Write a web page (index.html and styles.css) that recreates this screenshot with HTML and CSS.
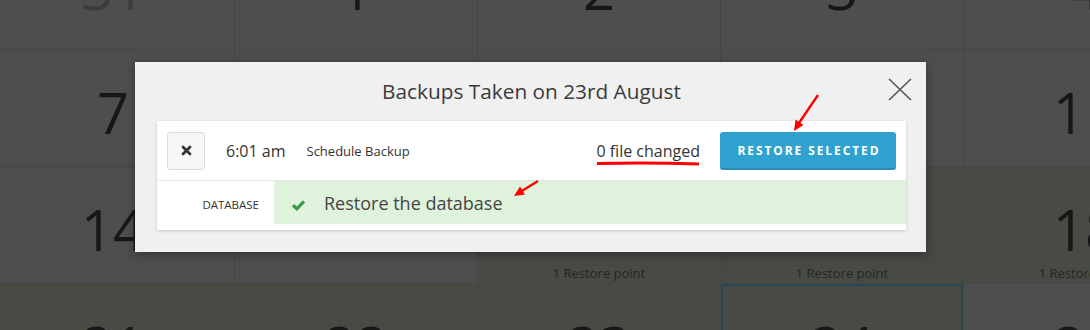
FILE: index.html
```html
<!DOCTYPE html>
<html lang="en">
<head>
<meta charset="utf-8">
<title>Backups</title>
<link rel="stylesheet" href="styles.css">
</head>
<body>
<div class="calendar">
  <div class="cell"><span class="num muted">31</span></div>
  <div class="cell"><span class="num">1</span></div>
  <div class="cell"><span class="num">2</span></div>
  <div class="cell"><span class="num">3</span></div>
  <div class="cell"><span class="num">4</span></div>

  <div class="cell"><span class="num">7</span></div>
  <div class="cell"><span class="num">8</span></div>
  <div class="cell"><span class="num">9</span></div>
  <div class="cell"><span class="num">10</span></div>
  <div class="cell"><span class="num">11</span></div>

  <div class="cell"><span class="num">14</span></div>
  <div class="cell"><span class="num">15</span></div>
  <div class="cell has-backup"><span class="num">16</span><span class="points">1 Restore point</span></div>
  <div class="cell has-backup"><span class="num">17</span><span class="points">1 Restore point</span></div>
  <div class="cell has-backup"><span class="num">18</span><span class="points">1 Restore point</span></div>

  <div class="cell has-backup"><span class="num">21</span></div>
  <div class="cell has-backup"><span class="num">22</span></div>
  <div class="cell has-backup"><span class="num">23</span></div>
  <div class="cell has-backup today"><span class="num">24</span></div>
  <div class="cell"><span class="num">25</span></div>
</div>

<div class="modal">
  <div class="modal-header">
    <h2 class="modal-title">Backups Taken on 23rd August</h2>
    <button class="modal-close" aria-label="Close">
      <svg width="24" height="23" viewBox="0 0 24 23"><path d="M1 1 L23 22 M23 1 L1 22" stroke="#555" stroke-width="1.6" fill="none"/></svg>
    </button>
  </div>
  <div class="panel">
    <div class="backup-row">
      <button class="remove-btn" aria-label="Remove">
        <svg width="11" height="11" viewBox="0 0 11 11"><path d="M2 2 L9 9 M9 2 L2 9" stroke="#333" stroke-width="2.8" stroke-linecap="round" fill="none"/></svg>
      </button>
      <span class="time">6:01 am</span>
      <span class="kind">Schedule Backup</span>
      <span class="changed">0 file changed</span>
      <button class="restore-btn">RESTORE SELECTED</button>
    </div>
    <div class="entity-row">
      <div class="entity-label">DATABASE</div>
      <div class="entity-body">
        <svg class="check" width="15" height="12" viewBox="0 0 15 12"><path d="M2 6.2 L5.8 9.8 L13 2.3" stroke="#3b9a4b" stroke-width="3.2" fill="none"/></svg>
        <span class="entity-text">Restore the database</span>
      </div>
    </div>
  </div>
</div>

<svg class="annotations" width="1090" height="330" viewBox="0 0 1090 330">
  <path d="M818 95 L799 123" stroke="#f00" stroke-width="2.4" fill="none"/>
  <polygon points="794,131 803.5,125 795.5,119.5" fill="#f00"/>
  <path d="M538 181 L521 191.5" stroke="#f00" stroke-width="2.4" fill="none"/>
  <polygon points="514,196 525,194.5 520,186.5" fill="#f00"/>
  <path d="M597 163.5 Q650 162.5 699 164" stroke="#f00" stroke-width="3" fill="none"/>
</svg>
</body>
</html>
```
FILE: styles.css
```css
html, body {
  margin: 0;
  padding: 0;
  width: 1090px;
  height: 330px;
  overflow: hidden;
  background: #4e4e4e;
  font-family: "Open Sans", "Liberation Sans", sans-serif;
  color: #333;
}

.calendar {
  display: grid;
  grid-template-columns: repeat(5, 243px);
  grid-template-rows: 124px 117px 117px 117px;
  margin-left: -8px;
  margin-top: -74px;
  width: 1215px;
}

.cell {
  background: #4e4e4e;
  border-right: 1px solid #464646;
  border-bottom: 1px solid #464646;
  display: flex;
  flex-direction: column;
  align-items: center;
  justify-content: flex-start;
  padding-top: 34px;
  box-sizing: border-box;
}

.cell.has-backup {
  background: #474b44;
}

.cell.today {
  box-shadow: inset 0 0 0 2px #284654;
}

.num {
  font-size: 56px;
  line-height: 56px;
  color: #171717;
  display: block;
}

.num.muted {
  color: #3c3c3c;
}

.points {
  font-size: 13px;
  line-height: 18px;
  color: #262626;
  margin-top: 7px;
}

.modal {
  position: absolute;
  left: 135px;
  top: 62px;
  width: 791px;
  height: 190px;
  background: #f0f0f0;
  box-shadow: 0 3px 10px rgba(0, 0, 0, 0.35);
  padding: 0 20px 0 22px;
  box-sizing: border-box;
}

.modal-header {
  position: relative;
  height: 59px;
  display: flex;
  justify-content: center;
}

.modal-title {
  margin: 0;
  padding-top: 15px;
  font-size: 20.8px;
  line-height: 29px;
  font-weight: 400;
  color: #3a3a3a;
}

.modal-close {
  position: absolute;
  right: -6px;
  top: 16px;
  border: 0;
  background: none;
  padding: 0;
  width: 24px;
  height: 23px;
}

.modal-close svg {
  display: block;
}

.panel {
  background: #fff;
  box-shadow: 0 1px 3px rgba(0, 0, 0, 0.18);
  padding-bottom: 6px;
}

.backup-row {
  height: 60px;
  display: flex;
  align-items: center;
  padding: 0 10px;
  border-bottom: 1px solid #e6e6e6;
  box-sizing: border-box;
}

.remove-btn {
  width: 38px;
  height: 38px;
  border: 1px solid #dcdcdc;
  border-radius: 3px;
  background: #f7f7f7;
  display: flex;
  align-items: center;
  justify-content: center;
  padding: 0;
  margin-right: 21px;
}

.remove-btn svg {
  display: block;
}

.time {
  font-size: 16px;
  color: #333;
  margin-right: 21px;
}

.kind {
  font-size: 13px;
  color: #333;
  flex: 1;
}

.changed {
  font-size: 16px;
  color: #333;
  margin-right: 20px;
}

.restore-btn {
  width: 176px;
  height: 38px;
  border: 0;
  border-bottom: 2px solid #2a8db6;
  border-radius: 3px;
  background: #2fa2cf;
  color: #fff;
  font-family: "Open Sans", "Liberation Sans", sans-serif;
  font-weight: 700;
  font-size: 12px;
  letter-spacing: 1.9px;
  padding: 2px 0 0 2px;
}

.entity-row {
  display: flex;
  height: 43px;
}

.entity-label {
  width: 117px;
  display: flex;
  align-items: center;
  justify-content: flex-end;
  padding-right: 15px;
  box-sizing: border-box;
  font-size: 11.5px;
  color: #333;
  padding-top: 3px;
}

.entity-body {
  flex: 1;
  background: #dff2dc;
  display: flex;
  align-items: center;
  padding-left: 17px;
}

.check {
  display: block;
  margin-top: 4px;
  margin-right: 18px;
}

.entity-text {
  font-size: 18px;
  color: #454545;
}

.annotations {
  position: absolute;
  left: 0;
  top: 0;
  pointer-events: none;
}
```
